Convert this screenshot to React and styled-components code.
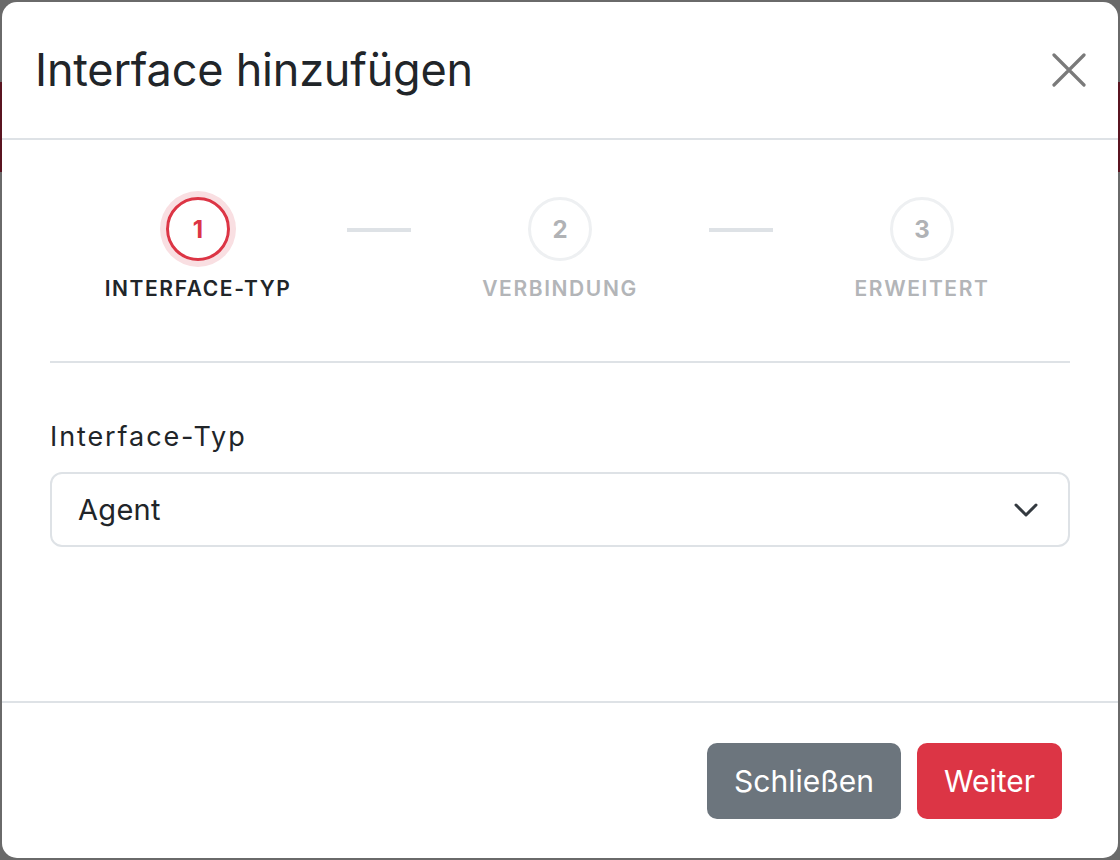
import styled, { createGlobalStyle } from 'styled-components'

const GlobalStyle = createGlobalStyle`
  html, body {
    margin: 0;
    padding: 0;
  }
  body {
    background: linear-gradient(to bottom, #6a6a6a 0, #6a6a6a 82px, #5a1420 82px, #5a1420 172px, #6a6a6a 172px);
    font-family: Inter, "Noto Sans", "Liberation Sans", sans-serif;
    color: #212529;
  }
`

const colors = {
  primary: '#dc3545',
  secondary: '#6c757d',
  border: '#dee2e6',
  text: '#212529',
  muted: '#b3b5b8',
}

const Backdrop = styled.div`
  padding: 2px;
  height: 860px;
  box-sizing: border-box;
`

const Modal = styled.div`
  height: 856px;
  background: #fff;
  border-radius: 15px;
  display: flex;
  flex-direction: column;
  overflow: hidden;
`

const Header = styled.div`
  display: flex;
  justify-content: space-between;
  align-items: center;
  height: 136px;
  padding: 0 32px 0 33px;
  border-bottom: 2px solid ${colors.border};
`

const Title = styled.h5`
  margin: 0;
  font-size: 45px;
  font-weight: 400;
  letter-spacing: -0.2px;
  padding-bottom: 2px;
`

const CloseButton = styled.button`
  border: none;
  background: none;
  padding: 0;
  width: 34px;
  height: 34px;
  display: flex;
  align-items: center;
  justify-content: center;
  cursor: pointer;
`

const Body = styled.div`
  flex: 1;
  padding: 57px 48px 0 48px;
`

const Stepper = styled.div`
  display: flex;
  justify-content: center;
  align-items: flex-start;
  padding-bottom: 60px;
  border-bottom: 2px solid ${colors.border};
`

const Step = styled.div`
  width: 240px;
  display: flex;
  flex-direction: column;
  align-items: center;
`

const StepCircle = styled.div`
  width: 64px;
  height: 64px;
  box-sizing: border-box;
  border-radius: 50%;
  border: 3px solid ${(p) => (p.$active ? colors.primary : '#eef0f2')};
  box-shadow: ${(p) => (p.$active ? '0 0 0 6px #f9dfe2' : 'none')};
  display: flex;
  align-items: center;
  justify-content: center;
  font-size: 24px;
  font-weight: 700;
  color: ${(p) => (p.$active ? colors.primary : '#b0b2b5')};
`

const StepLabel = styled.div`
  margin-top: 15px;
  font-size: 21px;
  font-weight: 600;
  letter-spacing: 1.6px;
  text-transform: uppercase;
  color: ${(p) => (p.$active ? colors.text : colors.muted)};
`

const Connector = styled.div`
  width: 64px;
  height: 4px;
  margin: 31px 29px 0;
  background: ${colors.border};
`

const Field = styled.div`
  padding-top: 57px;
`

const Label = styled.label`
  display: block;
  font-size: 27px;
  letter-spacing: 1.9px;
  margin-bottom: 19px;
`

const Select = styled.div`
  height: 75px;
  box-sizing: border-box;
  border: 2px solid ${colors.border};
  border-radius: 12px;
  display: flex;
  align-items: center;
  justify-content: space-between;
  padding: 0 30px 0 26px;
  font-size: 29px;
  letter-spacing: 0.3px;
`

const Footer = styled.div`
  display: flex;
  justify-content: flex-end;
  align-items: center;
  gap: 16px;
  height: 155px;
  padding: 0 56px 0 0;
  border-top: 2px solid ${colors.border};
`

const Button = styled.button`
  height: 76px;
  padding: 0 27px;
  border: none;
  border-radius: 10px;
  background: ${(p) => (p.$variant === 'primary' ? colors.primary : colors.secondary)};
  color: #fff;
  font-family: inherit;
  font-size: 30px;
  cursor: pointer;
`

const steps = [
  { n: 1, label: 'Interface-Typ' },
  { n: 2, label: 'Verbindung' },
  { n: 3, label: 'Erweitert' },
]

function App() {
  const current = 1

  return (
    <>
      <GlobalStyle />
      <Backdrop>
        <Modal>
          <Header>
            <Title>Interface hinzufügen</Title>
            <CloseButton aria-label="Close">
              <svg width="34" height="34" viewBox="0 0 34 34">
                <path d="M2 2 L32 32 M32 2 L2 32" stroke="#7a7a7a" strokeWidth="3.2" strokeLinecap="round" />
              </svg>
            </CloseButton>
          </Header>
          <Body>
            <Stepper>
              {steps.map((s, i) => (
                <Wrap key={s.n} last={i === steps.length - 1}>
                  <Step>
                    <StepCircle $active={s.n === current}>{s.n}</StepCircle>
                    <StepLabel $active={s.n === current}>{s.label}</StepLabel>
                  </Step>
                </Wrap>
              ))}
            </Stepper>
            <Field>
              <Label>Interface-Typ</Label>
              <Select>
                Agent
                <svg width="24" height="14" viewBox="0 0 24 14">
                  <path d="M2 2 L12 12 L22 2" fill="none" stroke="#343a40" strokeWidth="3" strokeLinecap="round" strokeLinejoin="round" />
                </svg>
              </Select>
            </Field>
          </Body>
          <Footer>
            <Button>Schließen</Button>
            <Button $variant="primary">Weiter</Button>
          </Footer>
        </Modal>
      </Backdrop>
    </>
  )
}

function Wrap({ last, children }) {
  return (
    <>
      {children}
      {!last && <Connector />}
    </>
  )
}

export default App
